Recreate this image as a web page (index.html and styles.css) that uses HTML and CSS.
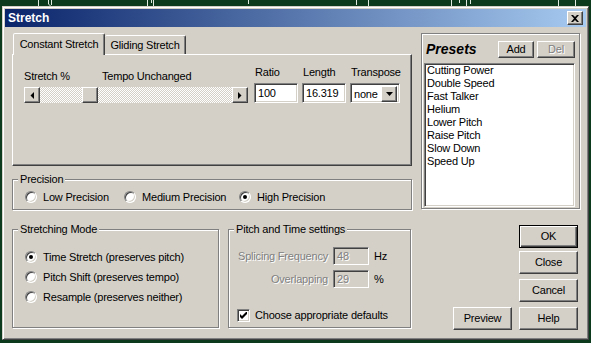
FILE: index.html
```html
<!DOCTYPE html>
<html>
<head>
<meta charset="utf-8">
<title>Stretch</title>
<link rel="stylesheet" href="styles.css">
</head>
<body>
<svg class="strip" width="591" height="6" viewBox="0 0 591 6">
  <g stroke="#dfe9df" stroke-width="1" fill="none">
    <path d="M38.5 0V6M48.5 0V4L50.5 6M51.5 0V5M147.5 0V6M151.5 0V3M153.5 0V6M248.5 0V4M356.5 0V5M368.5 0V6M451.5 0V6M459.5 0V3M466.5 0V6M470.5 0V4M558.5 0V6M575.5 0V6"/>
  </g>
</svg>
<div class="window">
  <div class="titlebar">
    <span class="title">Stretch</span>
    <span class="close">
      <svg width="8" height="7" viewBox="0 0 8 7"><path d="M0 0h2l2 2 2-2h2L5 3.5 8 7H6L4 5 2 7H0l3-3.5z" fill="#000"/></svg>
    </span>
  </div>
  <div class="content">
    <div class="top">
      <div class="left">
        <div class="tabs">
          <div class="tab active">Constant Stretch</div>
          <div class="tab inactive">Gliding Stretch</div>
        </div>
        <div class="panel">
          <div class="sliderblock">
            <div class="sliderlabels"><span class="lbl1">Stretch %</span><span>Tempo Unchanged</span></div>
            <div class="scrollbar">
              <div class="raised sbbtn"><svg width="4" height="7" viewBox="0 0 4 7"><path d="M4 0V7L0.5 3.5z" fill="#000"/></svg></div>
              <div class="track"><div class="raised thumb"></div></div>
              <div class="raised sbbtn"><svg width="4" height="7" viewBox="0 0 4 7"><path d="M0 0V7L3.5 3.5z" fill="#000"/></svg></div>
            </div>
          </div>
          <div class="field first">
            <div class="flabel">Ratio</div>
            <div class="edit w44">100</div>
          </div>
          <div class="field">
            <div class="flabel">Length</div>
            <div class="edit w44">16.319</div>
          </div>
          <div class="field">
            <div class="flabel">Transpose</div>
            <div class="sunken select">
              <span class="seltext">none</span>
              <span class="raised dd"><svg width="7" height="4" viewBox="0 0 7 4"><path d="M0 0h7L3.5 4z" fill="#000"/></svg></span>
            </div>
          </div>
        </div>
        <div class="group precision">
          <div class="legend">Precision</div>
          <div class="radios">
            <div class="ritem w99"><span class="rb"></span>Low Precision</div>
            <div class="ritem w115"><span class="rb"></span>Medium Precision</div>
            <div class="ritem"><span class="rb on"></span>High Precision</div>
          </div>
        </div>
      </div>
      <div class="group presets">
        <div class="phead">
          <span class="ptitle">Presets</span>
          <span class="raised btn add">Add</span>
          <span class="raised btn del">Del</span>
        </div>
        <div class="sunken list">
          <div>Cutting Power</div>
          <div>Double Speed</div>
          <div>Fast Talker</div>
          <div>Helium</div>
          <div>Lower Pitch</div>
          <div>Raise Pitch</div>
          <div>Slow Down</div>
          <div>Speed Up</div>
        </div>
      </div>
    </div>
    <div class="bottom">
      <div class="group mode">
        <div class="legend">Stretching Mode</div>
        <div class="mlist">
          <div class="mrow"><span class="rb on"></span>Time Stretch (preserves pitch)</div>
          <div class="mrow"><span class="rb"></span>Pitch Shift (preserves tempo)</div>
          <div class="mrow"><span class="rb"></span>Resample (preserves neither)</div>
        </div>
      </div>
      <div class="group pitch">
        <div class="legend">Pitch and Time settings</div>
        <div class="prow first">
          <span class="plabel disabled">Splicing Frequency</span>
          <span class="sunken dedit disabled">48</span>
          <span class="unit">Hz</span>
        </div>
        <div class="prow">
          <span class="plabel disabled">Overlapping</span>
          <span class="sunken dedit disabled">29</span>
          <span class="unit">%</span>
        </div>
        <div class="crow">
          <span class="sunken cb"><svg width="7" height="7" viewBox="0 0 7 7"><path d="M0 2v3l2 2 5-5V-1L2 4z" fill="#000"/></svg></span>
          <span>Choose appropriate defaults</span>
        </div>
      </div>
      <div class="btnarea">
        <span class="raised btn big">Preview</span>
        <div class="btncol">
          <span class="btn big default">OK</span>
          <span class="raised btn big close-b">Close</span>
          <span class="raised btn big gap5">Cancel</span>
          <span class="raised btn big gap5">Help</span>
        </div>
      </div>
    </div>
  </div>
</div>
</body>
</html>
```
FILE: styles.css
```css
* { box-sizing: border-box; }
html, body { margin: 0; padding: 0; }
body {
  background: #0c3a1d;
  width: 591px;
  height: 343px;
  overflow: hidden;
  font-family: "Liberation Sans", Arial, sans-serif;
  font-size: 11px;
  line-height: 13px;
  letter-spacing: -0.2px;
  color: #000;
}
.strip { display: block; }

.window {
  margin-left: 2px;
  width: 587px;
  height: 334px;
  background: #d4d0c8;
  border: 1px solid;
  border-color: #d4d0c8 #404040 #404040 #d4d0c8;
  box-shadow: inset 1px 1px 0 #fff, inset -1px -1px 0 #808080;
  padding: 2px;
}

.titlebar {
  height: 18px;
  background: linear-gradient(to right, #0a246a, #a6caf0);
  display: flex;
  align-items: center;
  justify-content: space-between;
  padding: 0 3px 0 3px;
}
.title { color: #fff; font-weight: bold; font-size: 12px; letter-spacing: 0; }
.close {
  width: 16px;
  height: 14px;
  background: #d4d0c8;
  border: 1px solid;
  border-color: #fff #404040 #404040 #fff;
  box-shadow: inset -1px -1px 0 #808080;
  display: flex;
  align-items: center;
  justify-content: center;
}
.close svg { display: block; }

.raised {
  background: #d4d0c8;
  border: 1px solid;
  border-color: #fff #404040 #404040 #fff;
  box-shadow: inset -1px -1px 0 #808080;
}
.sunken {
  border: 1px solid;
  border-color: #808080 #fff #fff #808080;
  box-shadow: inset 1px 1px 0 #404040, inset -1px -1px 0 #d4d0c8;
}

.content { padding: 6px 0 0 7px; }
.top { display: flex; align-items: flex-start; }
.left { width: 400px; }

.tabs {
  height: 21px;
  display: flex;
  align-items: flex-end;
  padding-left: 1px;
  position: relative;
  z-index: 1;
}
.tab {
  height: 19px;
  padding-top: 3px;
  text-align: center;
  background: #d4d0c8;
  border: 1px solid;
  border-bottom: none;
  border-color: #fff #404040 transparent #fff;
  box-shadow: inset -1px 0 0 #808080;
  border-radius: 2px 2px 0 0;
}
.tab.active { width: 92px; height: 22px; margin-bottom: -1px; padding-top: 4px; }
.tab.inactive { width: 81px; border-left: none; }

.panel {
  height: 112px;
  border: 1px solid;
  border-color: #fff #404040 #404040 #fff;
  box-shadow: inset -1px -1px 0 #808080;
  display: flex;
  align-items: flex-start;
  padding-left: 11px;
}
.sliderblock { margin-top: 15px; }
.sliderlabels { display: flex; }
.lbl1 { width: 78px; }
.scrollbar { display: flex; width: 224px; height: 16px; margin-top: 4px; }
.sbbtn { width: 16px; height: 16px; display: flex; align-items: center; justify-content: center; }
.sbbtn svg, .dd svg, .cb svg { display: block; }
.track {
  flex: 1;
  background: repeating-conic-gradient(#fff 0 25%, #d4d0c8 0 50%) 0 0 / 2px 2px;
}
.thumb { width: 16px; height: 16px; margin-left: 42px; }

.field { margin-top: 11px; margin-left: 4px; }
.field.first { margin-left: 6px; }
.flabel { padding-left: 1px; }
.edit {
  margin-top: 4px;
  height: 20px;
  background: #fff;
  border: 1px solid;
  border-color: #808080 #fff #fff #808080;
  box-shadow: inset 1px 1px 0 #404040, inset -1px -1px 0 #d4d0c8;
  padding: 3px 0 0 3px;
}
.w44 { width: 44px; }
.select {
  margin-top: 4px;
  width: 50px;
  height: 20px;
  background: #fff;
  display: flex;
  padding: 2px;
}
.seltext { flex: 1; padding: 2px 0 0 1px; }
.dd { width: 16px; height: 16px; display: flex; align-items: center; justify-content: center; }

.group {
  border: 1px solid #808080;
  box-shadow: inset 1px 1px 0 #fff, 1px 1px 0 #fff;
}
.legend {
  width: fit-content;
  margin: -7px 0 0 5px;
  padding: 0 2px;
  background: #d4d0c8;
}
.precision { margin-top: 13px; height: 31px; width: 400px; }
.radios { display: flex; align-items: center; height: 14px; margin-top: 4px; padding-left: 12px; }
.ritem { display: flex; align-items: center; }
.w99 { width: 99px; }
.w115 { width: 115px; }
.rb {
  width: 12px;
  height: 12px;
  flex: none;
  border-radius: 50%;
  background: #fff;
  border: 1px solid;
  border-color: #808080 #fff #fff #808080;
  box-shadow: inset 1px 1px 0 #404040, inset -1px -1px 0 #d4d0c8;
  margin-right: 6px;
  position: relative;
}
.rb.on::after {
  content: "";
  position: absolute;
  left: 3px;
  top: 3px;
  width: 4px;
  height: 4px;
  border-radius: 50%;
  background: #000;
}

.presets { margin-left: 9px; width: 159px; height: 176px; padding-left: 2px; }
.phead { display: flex; align-items: center; height: 17px; margin-top: 7px; padding-left: 2px; }
.ptitle { font-weight: bold; font-style: italic; font-size: 14px; width: 72px; letter-spacing: 0; }
.btn { display: flex; align-items: center; justify-content: center; }
.add { width: 36px; height: 17px; }
.del { width: 38px; height: 17px; margin-left: 3px; color: #808080; text-shadow: 1px 1px 0 #fff; }
.list {
  margin-top: 5px;
  width: 151px;
  height: 144px;
  background: #fff;
  padding: 0 2px;
}

.bottom { display: flex; align-items: flex-start; margin-top: 15px; }
.mode { margin-top: 4px; width: 207px; height: 99px; }
.mlist { margin-top: 11px; padding-left: 12px; }
.mrow { display: flex; align-items: center; height: 20px; }

.pitch { margin-top: 4px; margin-left: 9px; width: 183px; height: 99px; }
.prow { display: flex; align-items: center; height: 18px; margin-top: 5px; }
.prow.first { margin-top: 11px; }
.plabel { width: 100px; text-align: right; padding-right: 1px; }
.disabled { color: #808080; text-shadow: 1px 1px 0 #fff; }
.dedit { width: 36px; height: 18px; margin-left: 4px; padding: 2px 0 0 3px; background: #d4d0c8; }
.unit { margin-left: 5px; }
.crow { display: flex; align-items: center; height: 13px; margin-top: 21px; padding-left: 8px; }
.cb {
  width: 13px;
  height: 13px;
  background: #fff;
  margin-right: 5px;
  display: flex;
  align-items: center;
  justify-content: center;
}

.btnarea { display: flex; align-items: flex-end; gap: 7px; margin-left: 42px; }
.btncol { display: flex; flex-direction: column; }
.big { width: 59px; height: 23px; }
.default {
  background: #d4d0c8;
  border: 1px solid #000;
  box-shadow: inset 1px 1px 0 #fff, inset -1px -1px 0 #404040, inset -2px -2px 0 #808080;
}
.close-b { margin-top: 3px; }
.gap5 { margin-top: 5px; }
```
